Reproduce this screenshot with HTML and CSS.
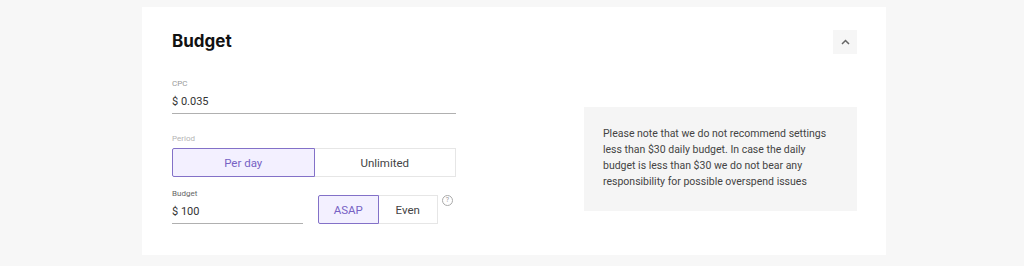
FILE: index.html
```html
<!DOCTYPE html>
<html lang="en">
<head>
    <meta charset="UTF-8">
    <meta name="viewport" content="width=device-width, initial-scale=1.0">
    <title>Budget</title>
    <link rel="stylesheet" href="styles.css">
</head>
<body>
    <div class="card">
        <div class="card-head">
            <h2>Budget</h2>
            <button class="collapse-btn" type="button">
                <svg width="9" height="6" viewBox="0 0 9 6"><path d="M1 5 L4.5 1.5 L8 5" fill="none" stroke="#666" stroke-width="1.5"/></svg>
            </button>
        </div>

        <div class="card-body">
            <div class="form">
                <div class="field field-cpc">
                    <div class="label">CPC</div>
                    <div class="value">$ 0.035</div>
                </div>

                <div class="label label-light period-label">Period</div>
                <div class="segmented period">
                    <div class="seg active">Per day</div>
                    <div class="seg">Unlimited</div>
                </div>

                <div class="budget-row">
                    <div class="field field-budget">
                        <div class="label label-dark">Budget</div>
                        <div class="value">$ 100</div>
                    </div>
                    <div class="segmented pacing">
                        <div class="seg active">ASAP</div>
                        <div class="seg">Even</div>
                    </div>
                    <span class="help">?</span>
                </div>
            </div>

            <div class="note">
                Please note that we do not recommend settings less than $30 daily budget. In case the daily budget is less than $30 we do not bear any responsibility for possible overspend issues
            </div>
        </div>
    </div>
</body>
</html>
```

FILE: styles.css
```css
body {
    margin: 0;
    background: #f7f7f7;
    font-family: Roboto, "Liberation Sans", sans-serif;
    color: #333;
    height: 266px;
    overflow: hidden;
}

.card {
    width: 744px;
    height: 248px;
    box-sizing: border-box;
    margin: 7px 0 0 142px;
    background: #fff;
    padding: 22px 29px 0 30px;
}

.card-head {
    display: flex;
    justify-content: space-between;
    align-items: center;
    height: 24px;
}

.card-head h2 {
    margin: 0;
    font-family: Inter, "DejaVu Sans", sans-serif;
    font-weight: 700;
    font-size: 17px;
    line-height: 24px;
    color: #111;
}

.collapse-btn {
    width: 24px;
    height: 24px;
    margin-top: 2px;
    border: none;
    background: #f6f6f6;
    padding: 0;
    display: flex;
    align-items: center;
    justify-content: center;
}

.card-body {
    display: grid;
    grid-template-columns: 284px 1fr;
    margin-top: 25px;
}

.label {
    font-size: 8px;
    line-height: 12px;
    color: #999;
}

.label-light {
    color: #b4b4b4;
}

.label-dark {
    color: #666;
}

.field {
    border-bottom: 1px solid #b0b0b0;
    padding-bottom: 2px;
}

.value {
    font-size: 11px;
    line-height: 18px;
    margin-top: 3px;
    color: #333;
}

.period-label {
    margin-top: 19px;
}

.segmented {
    display: flex;
    height: 29px;
    margin-top: 3px;
}

.seg {
    flex: 1;
    display: flex;
    align-items: center;
    justify-content: center;
    border: 1px solid #e6e6e6;
    font-size: 11.5px;
    color: #444;
    box-sizing: border-box;
}

.seg + .seg {
    border-left: none;
}

.seg.active {
    background: #f3f0ff;
    border: 1px solid #8371c8;
    color: #7762c4;
    border-radius: 2px 0 0 2px;
}

.budget-row {
    display: flex;
    align-items: flex-start;
    margin-top: 11px;
}

.field-budget {
    width: 131px;
}

.field-budget .value {
    margin-top: 3px;
}

.pacing {
    width: 120px;
    margin: 7px 0 0 15px;
}

.help {
    width: 9px;
    height: 9px;
    margin: 7px 0 0 4px;
    border: 1px solid #aaa;
    border-radius: 50%;
    font-size: 7px;
    line-height: 9px;
    text-align: center;
    color: #999;
}

.note {
    justify-self: end;
    width: 273px;
    box-sizing: border-box;
    margin-top: 29px;
    height: 104px;
    padding: 19px 18px 0 19px;
    background: #f5f5f5;
    font-size: 10.5px;
    line-height: 16px;
    color: #444;
}
```
